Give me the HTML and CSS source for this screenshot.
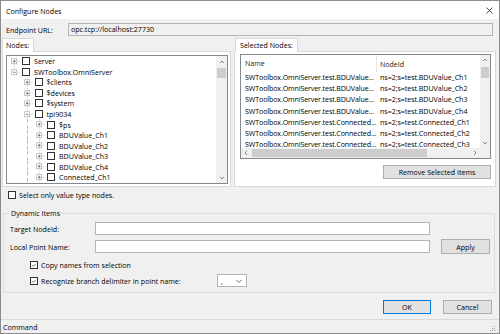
FILE: index.html
```html
<!DOCTYPE html>
<html>
<head>
<meta charset="utf-8">
<link rel="stylesheet" href="styles.css">
</head>
<body>
<div class="win">
  <div class="titlebar">
    <span class="title">Configure Nodes</span>
    <svg class="close" width="7" height="7" viewBox="0 0 7 7"><path d="M0.5 0.5 L6.5 6.5 M6.5 0.5 L0.5 6.5" stroke="#222" stroke-width="0.8" fill="none"/></svg>
  </div>
  <div class="main">
    <div class="endpoint">
      <span class="ep-label">Endpoint URL:</span>
      <div class="ro-input">opc.tcp://localhost:27730</div>
    </div>

    <div class="tabsrow">
      <div class="tabctl tabctl-left">
        <div class="tabhead"><div class="tab">Nodes:</div></div>
        <div class="tabpage page-left">
          <div class="tree">
            <div class="tree-items">
              <div class="trow">
                <svg class="exp" viewBox="0 0 12.5 10.55"><path d="M6.25 5.3 V10.55 M6.25 5.3 H12.5" class="dl"/><rect x="3.75" y="2.8" width="5" height="5" class="bx"/><path d="M4.9 5.3 H7.6 M6.25 3.95 V6.65" class="pm"/></svg>
                <span class="cb"></span><span class="tx">Server</span>
              </div>
              <div class="trow">
                <svg class="exp" viewBox="0 0 12.5 10.55"><path d="M6.25 0 V5.3 M6.25 5.3 H12.5" class="dl"/><rect x="3.75" y="2.8" width="5" height="5" class="bx"/><path d="M4.9 5.3 H7.6" class="pm"/></svg>
                <span class="cb"></span><span class="tx">SWToolbox.OmniServer</span>
              </div>
              <div class="trow">
                <span class="guide"></span>
                <svg class="exp" viewBox="0 0 12.5 10.55"><path d="M6.25 0 V10.55 M6.25 5.3 H12.5" class="dl"/><rect x="3.75" y="2.8" width="5" height="5" class="bx"/><path d="M4.9 5.3 H7.6 M6.25 3.95 V6.65" class="pm"/></svg>
                <span class="cb"></span><span class="tx">$clients</span>
              </div>
              <div class="trow">
                <span class="guide"></span>
                <svg class="exp" viewBox="0 0 12.5 10.55"><path d="M6.25 0 V10.55 M6.25 5.3 H12.5" class="dl"/><rect x="3.75" y="2.8" width="5" height="5" class="bx"/><path d="M4.9 5.3 H7.6 M6.25 3.95 V6.65" class="pm"/></svg>
                <span class="cb"></span><span class="tx">$devices</span>
              </div>
              <div class="trow">
                <span class="guide"></span>
                <svg class="exp" viewBox="0 0 12.5 10.55"><path d="M6.25 0 V10.55 M6.25 5.3 H12.5" class="dl"/><rect x="3.75" y="2.8" width="5" height="5" class="bx"/><path d="M4.9 5.3 H7.6 M6.25 3.95 V6.65" class="pm"/></svg>
                <span class="cb"></span><span class="tx">$system</span>
              </div>
              <div class="trow">
                <span class="guide"></span>
                <svg class="exp" viewBox="0 0 12.5 10.55"><path d="M6.25 0 V10.55 M6.25 5.3 H12.5" class="dl"/><rect x="3.75" y="2.8" width="5" height="5" class="bx"/><path d="M4.9 5.3 H7.6" class="pm"/></svg>
                <span class="cb"></span><span class="tx">tpi9034</span>
              </div>
              <div class="trow">
                <span class="guide"></span><span class="guide vline"></span>
                <svg class="exp" viewBox="0 0 12.5 10.55"><path d="M6.25 0 V10.55 M6.25 5.3 H12.5" class="dl"/><rect x="3.75" y="2.8" width="5" height="5" class="bx"/><path d="M4.9 5.3 H7.6 M6.25 3.95 V6.65" class="pm"/></svg>
                <span class="cb"></span><span class="tx">$ps</span>
              </div>
              <div class="trow">
                <span class="guide"></span><span class="guide vline"></span>
                <svg class="exp" viewBox="0 0 12.5 10.55"><path d="M6.25 0 V10.55 M6.25 5.3 H12.5" class="dl"/><rect x="3.75" y="2.8" width="5" height="5" class="bx"/><path d="M4.9 5.3 H7.6 M6.25 3.95 V6.65" class="pm"/></svg>
                <span class="cb"></span><span class="tx">BDUValue_Ch1</span>
              </div>
              <div class="trow">
                <span class="guide"></span><span class="guide vline"></span>
                <svg class="exp" viewBox="0 0 12.5 10.55"><path d="M6.25 0 V10.55 M6.25 5.3 H12.5" class="dl"/><rect x="3.75" y="2.8" width="5" height="5" class="bx"/><path d="M4.9 5.3 H7.6 M6.25 3.95 V6.65" class="pm"/></svg>
                <span class="cb"></span><span class="tx">BDUValue_Ch2</span>
              </div>
              <div class="trow">
                <span class="guide"></span><span class="guide vline"></span>
                <svg class="exp" viewBox="0 0 12.5 10.55"><path d="M6.25 0 V10.55 M6.25 5.3 H12.5" class="dl"/><rect x="3.75" y="2.8" width="5" height="5" class="bx"/><path d="M4.9 5.3 H7.6 M6.25 3.95 V6.65" class="pm"/></svg>
                <span class="cb"></span><span class="tx">BDUValue_Ch3</span>
              </div>
              <div class="trow">
                <span class="guide"></span><span class="guide vline"></span>
                <svg class="exp" viewBox="0 0 12.5 10.55"><path d="M6.25 0 V10.55 M6.25 5.3 H12.5" class="dl"/><rect x="3.75" y="2.8" width="5" height="5" class="bx"/><path d="M4.9 5.3 H7.6 M6.25 3.95 V6.65" class="pm"/></svg>
                <span class="cb"></span><span class="tx">BDUValue_Ch4</span>
              </div>
              <div class="trow">
                <span class="guide"></span><span class="guide vline"></span>
                <svg class="exp" viewBox="0 0 12.5 10.55"><path d="M6.25 0 V10.55 M6.25 5.3 H12.5" class="dl"/><rect x="3.75" y="2.8" width="5" height="5" class="bx"/><path d="M4.9 5.3 H7.6 M6.25 3.95 V6.65" class="pm"/></svg>
                <span class="cb"></span><span class="tx">Connected_Ch1</span>
              </div>
            </div>
            <div class="vscroll tree-vs">
              <div class="arrow"><svg width="10" height="10" viewBox="0 0 10 10"><path d="M3 6 L5 4 L7 6" class="chev"/></svg></div>
              <div class="thumb tree-thumb"></div>
              <div class="spacer"></div>
              <div class="arrow"><svg width="10" height="10" viewBox="0 0 10 10"><path d="M3 4 L5 6 L7 4" class="chev"/></svg></div>
            </div>
          </div>
        </div>
      </div>

      <div class="tabctl tabctl-right">
        <div class="tabhead"><div class="tab tab-right">Selected Nodes:</div></div>
        <div class="tabpage page-right">
          <div class="list">
            <div class="list-content">
              <div class="lhead"><div class="c1">Name</div><div class="c2">NodeId</div></div>
              <div class="lrow"><div class="c1">SWToolbox.OmniServer.test.BDUValue...</div><div class="c2">ns=2;s=test.BDUValue_Ch1</div></div>
              <div class="lrow"><div class="c1">SWToolbox.OmniServer.test.BDUValue...</div><div class="c2">ns=2;s=test.BDUValue_Ch2</div></div>
              <div class="lrow"><div class="c1">SWToolbox.OmniServer.test.BDUValue...</div><div class="c2">ns=2;s=test.BDUValue_Ch3</div></div>
              <div class="lrow"><div class="c1">SWToolbox.OmniServer.test.BDUValue...</div><div class="c2">ns=2;s=test.BDUValue_Ch4</div></div>
              <div class="lrow"><div class="c1">SWToolbox.OmniServer.test.Connected...</div><div class="c2">ns=2;s=test.Connected_Ch1</div></div>
              <div class="lrow"><div class="c1">SWToolbox.OmniServer.test.Connected...</div><div class="c2">ns=2;s=test.Connected_Ch2</div></div>
              <div class="lrow"><div class="c1">SWToolbox.OmniServer.test.Connected...</div><div class="c2">ns=2;s=test.Connected_Ch3</div></div>
            </div>
            <div class="vscroll list-vs">
              <div class="arrow"><svg width="10" height="10" viewBox="0 0 10 10"><path d="M3 6 L5 4 L7 6" class="chev"/></svg></div>
              <div class="thumb list-thumb"></div>
              <div class="spacer"></div>
              <div class="arrow"><svg width="10" height="10" viewBox="0 0 10 10"><path d="M3 4 L5 6 L7 4" class="chev"/></svg></div>
            </div>
            <div class="hscroll">
              <div class="harrow"><svg width="10" height="10" viewBox="0 0 10 10"><path d="M6 3 L4 5 L6 7" class="chev"/></svg></div>
              <div class="hthumb"></div>
              <div class="spacer"></div>
              <div class="harrow"><svg width="10" height="10" viewBox="0 0 10 10"><path d="M4 3 L6 5 L4 7" class="chev"/></svg></div>
            </div>
            <div class="corner"></div>
          </div>
          <div class="btn remove-btn">Remove Selected Items</div>
        </div>
      </div>
    </div>

    <div class="valuetype">
      <span class="cb"></span><span class="cb-label">Select only value type nodes.</span>
    </div>

    <div class="group">
      <div class="legend">Dynamic Items</div>
      <div class="grow grow-first">
        <span class="glabel">Target NodeId:</span>
        <div class="input"></div>
      </div>
      <div class="grow grow-second">
        <span class="glabel">Local Point Name:</span>
        <div class="input"></div>
        <div class="btn apply-btn">Apply</div>
      </div>
      <div class="crow crow-copy">
        <span class="cb checked"><svg viewBox="0 0 8 8"><path d="M1.4 4.1 L3.2 5.9 L6.6 2.2" class="check"/></svg></span>
        <span class="cb-label">Copy names from selection</span>
      </div>
      <div class="crow crow-rec">
        <span class="cb checked"><svg viewBox="0 0 8 8"><path d="M1.4 4.1 L3.2 5.9 L6.6 2.2" class="check"/></svg></span>
        <span class="cb-label rec-label">Recognize branch delimiter in point name:</span>
        <div class="combo"><span class="combo-val">,</span><svg width="8" height="8" viewBox="0 0 8 8"><path d="M1.5 3 L4 5.5 L6.5 3" class="chev dark"/></svg></div>
      </div>
    </div>

    <div class="buttons">
      <div class="btn ok-btn">OK</div>
      <div class="btn cancel-btn">Cancel</div>
    </div>
  </div>
  <div class="status">
    <span>Command</span>
    <svg class="grip" width="7" height="7" viewBox="0 0 7 7">
      <rect x="5" y="1" width="1" height="1"/><rect x="3" y="3" width="1" height="1"/><rect x="5" y="3" width="1" height="1"/>
      <rect x="1" y="5" width="1" height="1"/><rect x="3" y="5" width="1" height="1"/><rect x="5" y="5" width="1" height="1"/>
    </svg>
  </div>
</div>
</body>
</html>
```

FILE: styles.css
```css
* { box-sizing: border-box; margin: 0; padding: 0; }

body {
  margin: 0;
  font-family: "Open Sans", "Noto Sans", sans-serif;
  font-size: 7.1px;
  color: #000;
  background: #fff;
}

.win {
  width: 500px;
  height: 334px;
  border: 1px solid #8c8c8c;
  display: flex;
  flex-direction: column;
  background: #f0f0f0;
  overflow: hidden;
}

.titlebar {
  height: 18px;
  flex: none;
  background: #fff;
  display: flex;
  align-items: center;
  justify-content: space-between;
  padding: 1px 6px 0 5px;
}
.title { line-height: 10px; }
.close { display: block; }

.main {
  flex: 1;
  display: flex;
  flex-direction: column;
}

.endpoint {
  margin-top: 4px;
  height: 13px;
  display: flex;
  align-items: center;
  padding-left: 5px;
}
.ep-label { width: 62px; line-height: 10px; }
.ro-input {
  width: 425px;
  height: 13px;
  border: 1px solid #b4b4b4;
  background: #f0f0f0;
  padding-left: 2px;
  line-height: 11px;
}

.tabsrow {
  margin-top: 2px;
  display: flex;
  gap: 3px;
  padding-left: 1px;
}
.tabctl { display: flex; flex-direction: column; }
.tabctl-left { width: 229px; }
.tabctl-right { width: 262px; }

.tabhead { height: 13px; display: flex; }
.tab {
  height: 14px;
  border: 1px solid #d9d9d9;
  border-bottom: none;
  background: #fff;
  padding: 0 4px 0 3px;
  line-height: 12px;
  position: relative;
  z-index: 1;
}
.tab-right { margin-left: 1px; padding-left: 4px; }

.tabpage {
  height: 136px;
  border: 1px solid #d9d9d9;
  background: #fff;
}
.page-left { padding: 3px 0 0 3px; }
.page-right {
  padding: 2px 4px 0 5px;
  display: flex;
  flex-direction: column;
  align-items: flex-end;
}

/* tree */
.tree {
  width: 222px;
  height: 129px;
  border: 1px solid #828790;
  background: #fff;
  display: flex;
}
.tree-items { flex: 1; padding-left: 1px; overflow: hidden; }
.trow {
  height: 10.55px;
  display: flex;
  align-items: center;
}
.guide { width: 12.5px; height: 100%; flex: none; }
.guide.vline {
  background-image: linear-gradient(#a8a8a8 50%, transparent 50%);
  background-size: 0.6px 1.2px;
  background-repeat: repeat-y;
  background-position: 6px 0;
}
.exp { width: 12.5px; height: 10.55px; flex: none; display: block; }
.dl { stroke: #a8a8a8; stroke-width: 0.6; stroke-dasharray: 0.6 0.6; fill: none; }
.bx { fill: #fff; stroke: #9a9a9a; stroke-width: 0.6; }
.pm { stroke: #303030; stroke-width: 0.6; fill: none; }

.cb {
  width: 8px;
  height: 8px;
  flex: none;
  border: 1px solid #333;
  background: #fff;
  display: block;
}
.trow .cb { margin-left: 1.5px; }
.cb svg { display: block; width: 6px; height: 6px; }
.check { stroke: #222; stroke-width: 0.8; fill: none; }
.tx { margin-left: 4px; line-height: 10px; white-space: nowrap; }

/* scrollbars */
.vscroll {
  width: 11px;
  flex: none;
  background: #f0f0f0;
  display: flex;
  flex-direction: column;
}
.arrow { height: 11px; display: flex; align-items: center; justify-content: center; flex: none; }
.arrow svg, .harrow svg { display: block; }
.chev { fill: none; stroke: #7a7a7a; stroke-width: 0.9; }
.chev.dark { stroke: #444; stroke-width: 0.8; }
.thumb { background: #cdcdcd; margin: 1px 1px 0; flex: none; }
.tree-thumb { height: 10px; }
.spacer { flex: 1; }

/* list */
.list {
  width: 251px;
  height: 105px;
  border: 1px solid #828790;
  background: #fff;
  display: grid;
  grid-template-columns: 1fr 10px;
  grid-template-rows: 1fr 10px;
}
.list-content { overflow: hidden; }
.lhead {
  height: 17px;
  display: flex;
  align-items: center;
  color: #1e1e1e;
}
.lhead .c1 { border-right: 1px solid #e5e5e5; height: 17px; line-height: 17px; letter-spacing: 0; }
.c1 {
  width: 136px;
  padding-left: 4px;
  white-space: nowrap;
  overflow: hidden;
  flex: none;
  letter-spacing: -0.12px;
}
.c2 { padding-left: 3px; white-space: nowrap; letter-spacing: -0.05px; }
.lrow {
  height: 11.2px;
  display: flex;
  align-items: center;
  line-height: 11px;
}
.list-vs { width: 10px; }
.list-vs .arrow { height: 10px; }
.list-thumb { height: 11px; margin-top: 2px; }
.hscroll {
  background: #f0f0f0;
  display: flex;
  align-items: stretch;
}
.harrow { width: 10px; display: flex; align-items: center; justify-content: center; flex: none; }
.hthumb { width: 175px; background: #cdcdcd; margin: 1px 0 1px 1px; }
.corner { background: #f0f0f0; }

.btn {
  background: #e1e1e1;
  border: 1px solid #adadad;
  display: flex;
  align-items: center;
  justify-content: center;
  line-height: 10px;
}
.remove-btn { width: 108px; height: 14px; margin-top: 6px; }

.valuetype {
  margin-top: 3px;
  height: 10px;
  display: flex;
  align-items: center;
  padding-left: 7px;
}
.cb-label { margin-left: 3px; line-height: 10px; white-space: nowrap; }

/* group */
.group {
  margin: 13px 4px 0 2px;
  height: 80px;
  border: 1px solid #dcdcdc;
  padding: 0 0 0 5px;
}
.legend {
  margin: -5px 0 0 0;
  height: 9px;
  line-height: 9px;
  padding: 0 1px 0 2px;
  background: #f0f0f0;
  width: max-content;
}
.grow { display: flex; align-items: center; padding-left: 1px; }
.grow-first { margin-top: 4px; height: 13px; }
.grow-second { margin-top: 4px; height: 15px; }
.glabel { width: 85px; line-height: 10px; }
.input {
  width: 335px;
  height: 13px;
  border: 1px solid #b4b4b4;
  background: #fff;
}
.apply-btn { width: 49px; height: 15px; margin-left: 11px; }

.crow { display: flex; align-items: center; padding-left: 21px; }
.crow-copy { margin-top: 5px; height: 12px; }
.crow-rec { margin-top: 3px; height: 13px; }
.cb.checked { padding: 0; }
.rec-label { width: 176px; }
.combo {
  width: 30px;
  height: 13px;
  border: 1px solid #b4b4b4;
  background: #fff;
  display: flex;
  align-items: center;
  justify-content: space-between;
  padding: 0 3px 0 3px;
}
.combo-val { line-height: 10px; }

.buttons {
  margin-top: 7px;
  height: 14px;
  display: flex;
  justify-content: flex-end;
  gap: 12px;
  padding-right: 7px;
}
.ok-btn { width: 48px; border-color: #0078d7; }
.cancel-btn { width: 49px; }

.status {
  height: 14px;
  flex: none;
  border-top: 1px solid #dadada;
  display: flex;
  align-items: center;
  justify-content: space-between;
  padding: 1px 3px 0 2px;
}
.status span { line-height: 10px; }
.grip { display: block; fill: #a0a0a0; align-self: flex-end; margin-bottom: 1px; }
```
